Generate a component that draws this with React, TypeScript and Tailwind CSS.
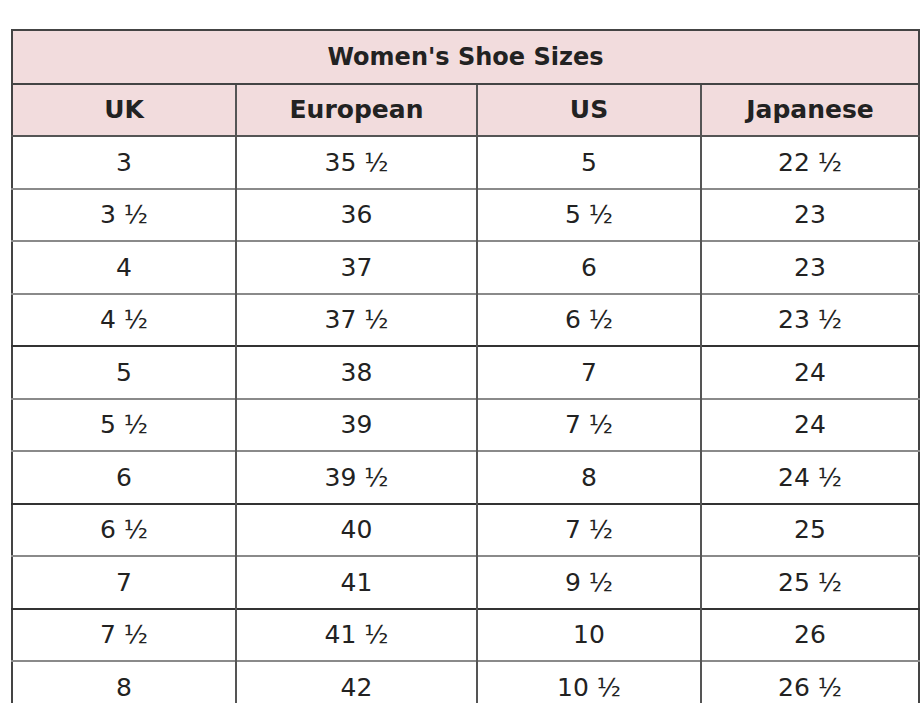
const rows: Array<[string, string, string, string]> = [
  ['3', '35 ½', '5', '22 ½'],
  ['3 ½', '36', '5 ½', '23'],
  ['4', '37', '6', '23'],
  ['4 ½', '37 ½', '6 ½', '23 ½'],
  ['5', '38', '7', '24'],
  ['5 ½', '39', '7 ½', '24'],
  ['6', '39 ½', '8', '24 ½'],
  ['6 ½', '40', '7 ½', '25'],
  ['7', '41', '9 ½', '25 ½'],
  ['7 ½', '41 ½', '10', '26'],
  ['8', '42', '10 ½', '26 ½'],
]

// rows followed by a darker rule
const darkAfter = new Set([3, 6, 8])

export default function App() {
  return (
    <div className="h-[703px] w-[924px] overflow-hidden bg-white pl-[11px] pt-[29px] font-['DejaVu_Sans',sans-serif] text-[#222]">
      <table className="w-[907px] table-fixed border-collapse border-2 border-[#444] text-center text-[25px]">
        <colgroup>
          <col className="w-[224px]" />
          <col className="w-[241px]" />
          <col className="w-[224px]" />
          <col className="w-[218px]" />
        </colgroup>
        <thead>
          <tr className="h-[54px] bg-[#f2dcdd]">
            <th colSpan={4} className="border-b-2 border-[#444] text-[24px] font-bold">
              Women's Shoe Sizes
            </th>
          </tr>
          <tr className="h-[52px] bg-[#f2dcdd] font-bold">
            <th className="border-r-2 border-b-2 border-[#555]">UK</th>
            <th className="border-r-2 border-b-2 border-[#555]">European</th>
            <th className="border-r-2 border-b-2 border-[#555]">US</th>
            <th className="border-b-2 border-[#555]">Japanese</th>
          </tr>
        </thead>
        <tbody>
          {rows.map((r, i) => (
            <tr
              key={i}
              className={
                darkAfter.has(i)
                  ? 'h-[52.5px] border-b-2 border-[#333]'
                  : 'h-[52.5px] border-b-2 border-[#8a8a8a]'
              }
            >
              {r.map((v, j) => (
                <td
                  key={j}
                  className={j < 3 ? 'border-r-2 border-[#555] font-normal' : 'font-normal'}
                >
                  {v}
                </td>
              ))}
            </tr>
          ))}
        </tbody>
      </table>
    </div>
  )
}
